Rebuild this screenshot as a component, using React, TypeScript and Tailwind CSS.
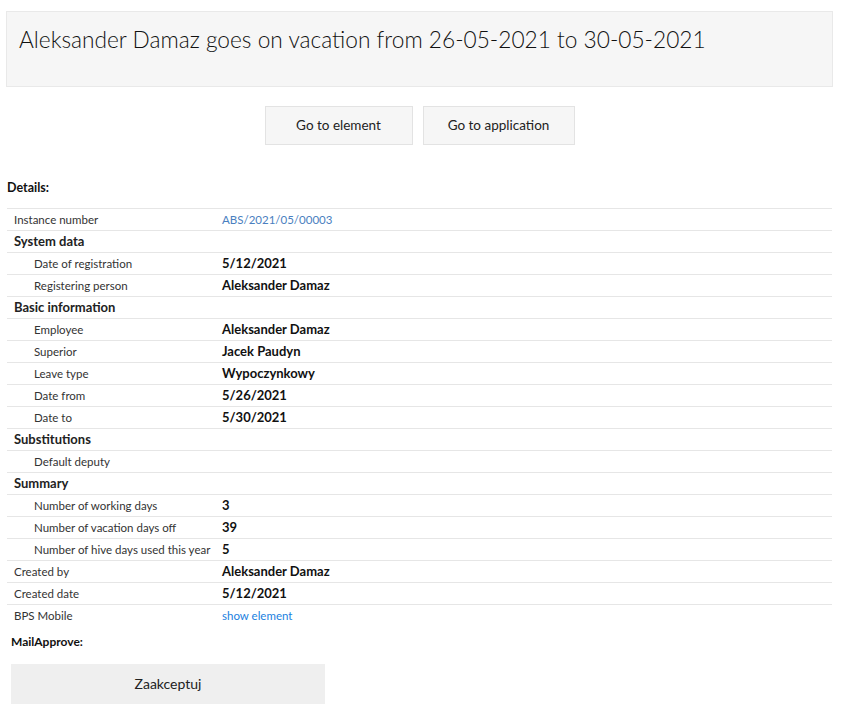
import React from 'react';

type Row = {
  label: string;
  value?: string;
  kind?: 'section' | 'sub' | 'top';
  link?: boolean;
};

const rows: Row[] = [
  { label: 'Instance number', value: 'ABS/2021/05/00003', kind: 'top', link: true },
  { label: 'System data', kind: 'section' },
  { label: 'Date of registration', value: '5/12/2021', kind: 'sub' },
  { label: 'Registering person', value: 'Aleksander Damaz', kind: 'sub' },
  { label: 'Basic information', kind: 'section' },
  { label: 'Employee', value: 'Aleksander Damaz', kind: 'sub' },
  { label: 'Superior', value: 'Jacek Paudyn', kind: 'sub' },
  { label: 'Leave type', value: 'Wypoczynkowy', kind: 'sub' },
  { label: 'Date from', value: '5/26/2021', kind: 'sub' },
  { label: 'Date to', value: '5/30/2021', kind: 'sub' },
  { label: 'Substitutions', kind: 'section' },
  { label: 'Default deputy', kind: 'sub' },
  { label: 'Summary', kind: 'section' },
  { label: 'Number of working days', value: '3', kind: 'sub' },
  { label: 'Number of vacation days off', value: '39', kind: 'sub' },
  { label: 'Number of hive days used this year', value: '5', kind: 'sub' },
  { label: 'Created by', value: 'Aleksander Damaz', kind: 'top' },
  { label: 'Created date', value: '5/12/2021', kind: 'top' },
  { label: 'BPS Mobile', value: 'show element', kind: 'top', link: true },
];

const DetailRow: React.FC<{ row: Row }> = ({ row }) => {
  if (row.kind === 'section') {
    return (
      <div className="h-[22px] flex items-center border-t border-[#e6e6e6] pl-[7px] text-[13px] font-bold text-[#222]">
        {row.label}
      </div>
    );
  }
  return (
    <div className="h-[22px] flex items-center border-t border-[#e6e6e6]">
      <div className={`w-[215px] shrink-0 text-[11.5px] text-[#333] ${row.kind === 'sub' ? 'pl-[27px]' : 'pl-[7px]'}`}>
        {row.label}
      </div>
      {row.link ? (
        <span className={`text-[11.5px] ${row.label === 'BPS Mobile' ? 'text-[#1a7fe0]' : 'text-[#4a7fc0]'}`}>{row.value}</span>
      ) : (
        <span className="text-[13px] font-bold text-[#111]">{row.value}</span>
      )}
    </div>
  );
};

export default function App() {
  return (
    <div className="w-[855px] min-h-[721px] bg-white pt-[11px] font-['Lato','Liberation_Sans',sans-serif]">
      {/* Title banner */}
      <div className="mx-[6px] w-[827px] h-[76px] bg-[#f6f6f6] border border-[#e9e9e9] pl-[12px] pt-[12px]">
        <h1 className="text-[22.7px] font-light text-[#111] leading-[32px]">
          Aleksander Damaz goes on vacation from 26-05-2021 to 30-05-2021
        </h1>
      </div>

      {/* Buttons */}
      <div className="flex justify-center gap-[10px] mt-[19px] pr-[16px]">
        <button className="w-[148px] h-[39px] bg-[#f6f6f6] border border-[#e3e3e3] text-[13.5px] text-[#222]">
          Go to element
        </button>
        <button className="w-[152px] h-[39px] bg-[#f6f6f6] border border-[#e3e3e3] text-[13.5px] text-[#222]">
          Go to application
        </button>
      </div>

      {/* Details */}
      <div className="mt-[34px] pl-[7px] text-[12.5px] font-bold text-[#111]">Details:</div>
      <div className="mt-[10px] ml-[7px] w-[825px]">
        {rows.map((r) => (
          <DetailRow key={r.label} row={r} />
        ))}
      </div>

      <div className="mt-[7px] pl-[11px] text-[12px] font-bold text-[#111]">MailApprove:</div>
      <button className="mt-[13px] ml-[11px] w-[314px] h-[40px] bg-[#efefef] text-[14px] text-[#222]">
        Zaakceptuj
      </button>
    </div>
  );
}
